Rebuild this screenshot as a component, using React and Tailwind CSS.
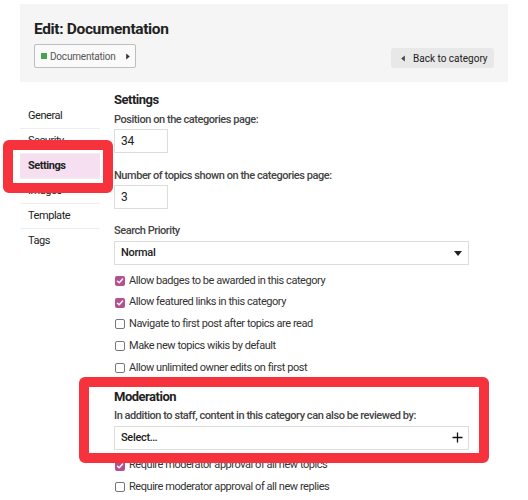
import React from 'react'

const NAV = ['General', 'Security', 'Settings', 'Images', 'Template', 'Tags']

const OPTIONS = [
  { label: 'Allow badges to be awarded in this category', checked: true },
  { label: 'Allow featured links in this category', checked: true },
  { label: 'Navigate to first post after topics are read', checked: false },
  { label: 'Make new topics wikis by default', checked: false },
  { label: 'Allow unlimited owner edits on first post', checked: false },
]

const MOD_OPTIONS = [
  { label: 'Require moderator approval of all new topics', checked: true },
  { label: 'Require moderator approval of all new replies', checked: false },
]

function Checkbox({ checked }) {
  if (checked) {
    return (
      <span className="flex h-[10px] w-[10px] shrink-0 items-center justify-center rounded-[2px] bg-[#b5508f]">
        <svg width="8" height="8" viewBox="0 0 10 10" fill="none">
          <path d="M1.8 5.2 L4 7.3 L8.3 2.6" stroke="white" strokeWidth="1.8" strokeLinecap="round" strokeLinejoin="round" />
        </svg>
      </span>
    )
  }
  return <span className="h-[10px] w-[10px] shrink-0 rounded-[2px] border border-[#777] bg-white" />
}

function CheckRow({ label, checked }) {
  return (
    <div className="flex h-[21.75px] items-center gap-[4px] pl-[1px]">
      <Checkbox checked={checked} />
      <span className="whitespace-nowrap text-[11px] tracking-[-0.45px] text-[#333]">{label}</span>
    </div>
  )
}

function Label({ children, className = '' }) {
  return (
    <div
      className={`h-[16px] whitespace-nowrap text-[11px] font-medium leading-[16px] tracking-[-0.45px] text-[#444] ${className}`}
    >
      {children}
    </div>
  )
}

function NumberInput({ value }) {
  return (
    <div className="mt-[1px] flex h-[24px] w-[54px] items-center border border-[#ddd] pl-[6px] text-[12px] tracking-[-0.3px] text-[#222]">
      {value}
    </div>
  )
}

export default function App() {
  return (
    <div
      className="relative h-[500px] w-[528px] overflow-hidden bg-white"
      style={{ fontFamily: 'Roboto, "Liberation Sans", sans-serif' }}
    >
      {/* header */}
      <div className="mx-[20px] mt-[4px] h-[78px] bg-[#f5f5f5] pl-[14px] pr-[14px] pt-[14px]">
        <h1 className="h-[22px] whitespace-nowrap text-[15.5px] font-bold leading-[22px] tracking-[-0.35px] text-[#222]">
          Edit: Documentation
        </h1>
        <div className="mt-[4px] flex items-end justify-between">
          <div className="flex h-[24px] w-[102px] shrink-0 items-center gap-[3px] rounded-[2px] border border-[#bdbdbd] bg-[#fafafa] pl-[6px]">
            <span className="h-[6px] w-[6px] shrink-0 bg-[#45a64e]" />
            <span className="whitespace-nowrap text-[10px] tracking-[-0.2px] text-[#555]">Documentation</span>
            <svg className="ml-[7px] shrink-0" width="4" height="7" viewBox="0 0 4 7">
              <path d="M0.2 0.5 L3.8 3.5 L0.2 6.5 Z" fill="#333" />
            </svg>
          </div>
          <button className="flex h-[20px] w-[103px] shrink-0 items-center gap-[8px] rounded-[3px] bg-[#e8e8e8] pl-[10px] text-[10px] text-[#222]">
            <svg className="shrink-0" width="4" height="7" viewBox="0 0 4 7">
              <path d="M3.8 0.5 L0.2 3.5 L3.8 6.5 Z" fill="#444" />
            </svg>
            <span className="whitespace-nowrap">Back to category</span>
          </button>
        </div>
      </div>

      {/* body */}
      <div className="flex">
        <nav className="ml-[20px] mt-[22px] w-[80px] shrink-0">
          {NAV.map((item, i) => (
            <div
              key={item}
              className={`flex h-[25px] items-center pl-[8px] text-[11px] tracking-[-0.45px] ${
                item === 'Settings' ? 'bg-[#f5dff0] font-bold text-[#222]' : 'text-[#222]'
              } ${i < NAV.length - 1 ? 'border-b border-[#eee]' : ''}`}
            >
              {item}
            </div>
          ))}
        </nav>

        <main className="ml-[14px] w-[355px] shrink-0 pt-[9px]">
          <h2 className="h-[18px] text-[13px] font-bold leading-[18px] tracking-[-0.5px] text-[#222]">Settings</h2>
          <Label className="mt-[3px]">Position on the categories page:</Label>
          <NumberInput value="34" />
          <Label className="mt-[15px]">Number of topics shown on the categories page:</Label>
          <NumberInput value="3" />
          <Label className="mt-[14px]">Search Priority</Label>
          <div className="mt-[2px] flex h-[24px] items-center justify-between border border-[#ddd] pl-[6px] pr-[6px]">
            <span className="text-[11px] font-medium tracking-[-0.3px] text-[#222]">Normal</span>
            <svg width="8" height="5" viewBox="0 0 8 5">
              <path d="M0 0 L8 0 L4 5 Z" fill="#222" />
            </svg>
          </div>

          <div className="mt-[5px]">
            {OPTIONS.map((o) => (
              <CheckRow key={o.label} {...o} />
            ))}
          </div>

          <h2 className="mt-[9px] h-[18px] text-[13px] font-bold leading-[18px] tracking-[-0.5px] text-[#222]">
            Moderation
          </h2>
          <Label className="mt-[2px]">In addition to staff, content in this category can also be reviewed by:</Label>
          <div className="mt-[2px] flex h-[24px] items-center justify-between border border-[#ddd] pl-[6px] pr-[5px]">
            <span className="text-[11px] font-medium tracking-[-0.3px] text-[#222]">Select…</span>
            <svg width="11" height="11" viewBox="0 0 11 11">
              <path d="M5.5 0.5 V10.5 M0.5 5.5 H10.5" stroke="#111" strokeWidth="1.3" />
            </svg>
          </div>

          <div className="mt-[5px]">
            {MOD_OPTIONS.map((o) => (
              <CheckRow key={o.label} {...o} />
            ))}
          </div>
        </main>
      </div>

      {/* annotation boxes */}
      <div className="pointer-events-none absolute left-[3px] top-[140px] h-[53px] w-[110px] rounded-[6px] border-[10px] border-[#f6323d]" />
      <div className="pointer-events-none absolute left-[79px] top-[377px] h-[86px] w-[410px] rounded-[6px] border-[10px] border-[#f6323d]" />
    </div>
  )
}
